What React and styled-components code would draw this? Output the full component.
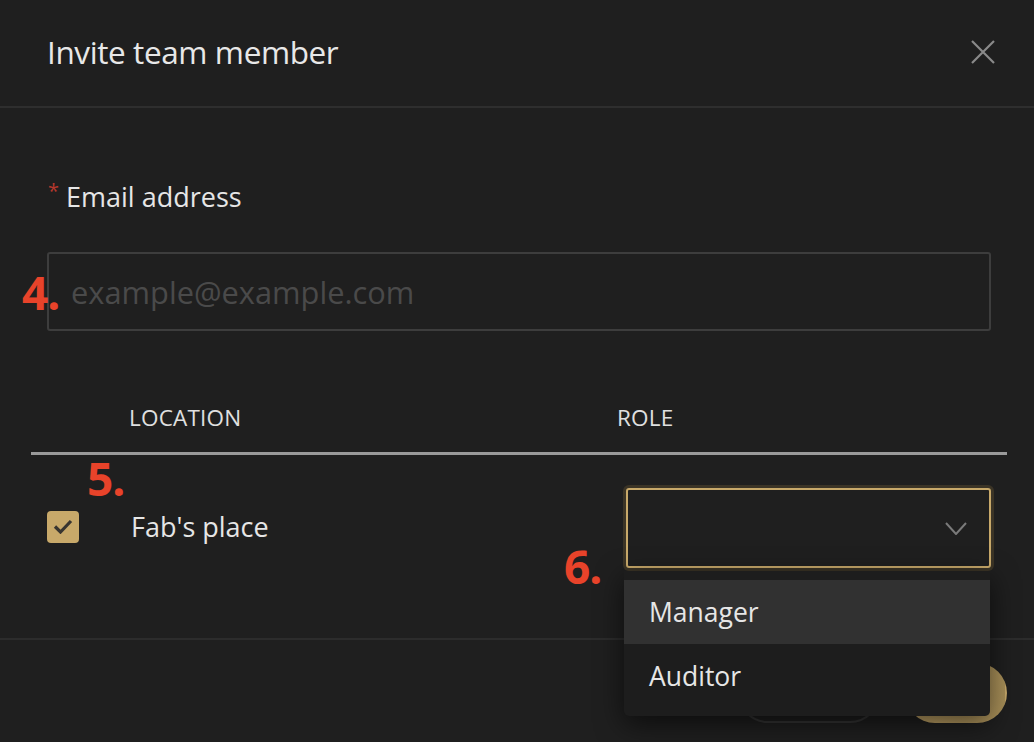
import * as React from "react";
import styled, { createGlobalStyle } from "styled-components";

const GlobalStyle = createGlobalStyle`
    html, body {
        margin: 0;
        padding: 0;
        background: #1f1f1f;
    }
    body {
        font-family: "Open Sans", "Noto Sans", sans-serif;
        color: #e6e6e6;
    }
`;

const Modal =
    styled.div`
        position: relative;
        width: 1034px;
        height: 742px;
        overflow: hidden;
        background: #1f1f1f;
        display: flex;
        flex-direction: column;
    `;

const Header =
    styled.div`
        height: 108px;
        border-bottom: 2px solid #2e2e2e;
        display: flex;
        align-items: center;
        justify-content: space-between;
        padding: 0 38px 4px 47px;
        box-sizing: border-box;

        h1 {
            margin: 0;
            font-size: 31.5px;
            font-weight: 400;
            color: #e8e8e8;
            letter-spacing: -0.4px;
        }
    `;

const CloseBtn =
    styled.button`
        background: none;
        border: 0;
        padding: 0;
        width: 26px;
        height: 26px;
        display: flex;
        align-items: center;
        justify-content: center;
        margin-top: 2px;
    `;

const Body =
    styled.div`
        padding: 71px 43px 0 47px;
        height: 532px;
        box-sizing: border-box;
        border-bottom: 2px solid #2c2c2c;
    `;

const Label =
    styled.label`
        display: flex;
        align-items: flex-start;
        font-size: 27px;
        color: #e6e6e6;
        line-height: 36px;

        .req {
            color: #b5372c;
            font-size: 20px;
            line-height: 20px;
            margin: 2px 7px 0 1px;
        }
    `;

const InputWrap =
    styled.div`
        position: relative;
        margin-top: 37px;
    `;

const TextInput =
    styled.input`
        width: 100%;
        box-sizing: border-box;
        height: 79px;
        background: transparent;
        border: 2px solid #3d3d3d;
        border-radius: 3px;
        padding: 0 22px;
        font-family: "Open Sans", "Noto Sans", sans-serif;
        font-size: 30.8px;
        color: #e6e6e6;
        outline: none;

        &::placeholder {
            color: #4a4a4a;
        }
    `;

const Marker =
    styled.span`
        position: absolute;
        font-family: "Open Sans", "Noto Sans", sans-serif;
        font-weight: 700;
        font-size: 46px;
        line-height: 1;
        color: #e8432a;
        letter-spacing: -1px;
        z-index: 6;
    `;

const Table =
    styled.div`
        margin: 54px -16px 0 -16px;
    `;

const HeadRow =
    styled.div`
        display: grid;
        grid-template-columns: 98px 488px 1fr;
        border-bottom: 3px solid #9a9a9a;
        height: 67px;
        align-items: center;

        span {
            font-size: 22.5px;
            color: #e0e0e0;
            letter-spacing: 0.2px;
            margin-top: -3px;
        }
    `;

const Row =
    styled.div`
        position: relative;
        display: grid;
        grid-template-columns: 84px 495px 365px;
        align-items: center;
        padding: 33px 0 0 16px;
    `;

const Check =
    styled.span`
        width: 32px;
        height: 32px;
        margin-top: -3px;
        border-radius: 4px;
        background: #c8a96a;
        display: flex;
        align-items: center;
        justify-content: center;
    `;

const Place =
    styled.span`
        font-size: 27px;
        color: #e6e6e6;
        margin-top: -3px;
    `;

const SelectBox =
    styled.div`
        position: relative;
        height: 80px;
        border: 2px solid #c8a96a;
        border-radius: 3px;
        box-shadow: 0 0 0 3px #3b3426;
        box-sizing: border-box;
        display: flex;
        align-items: center;
        justify-content: flex-end;
        padding-right: 22px;
    `;

const Menu =
    styled.div`
        position: absolute;
        top: calc(100% + 5px);
        left: -4px;
        width: 366px;
        background: #1d1d1d;
        border-radius: 0 0 5px 5px;
        padding: 9px 0 8px 0;
        box-shadow: 0 8px 28px rgba(0, 0, 0, 0.6);
        z-index: 5;
    `;

const MenuItem =
    styled.div`
        height: 64px;
        display: flex;
        align-items: center;
        padding-left: 25px;
        font-size: 26.5px;
        color: #e6e6e6;
        background: ${props => props.active ? "#313131" : "transparent"};
    `;

const Footer =
    styled.div`
        flex: 1;
        display: flex;
        justify-content: flex-end;
        align-items: flex-start;
        gap: 25px;
        padding: 23px 27px 0 0;
    `;

const Button =
    styled.button`
        height: 60px;
        border-radius: 30px;
        font-family: "Open Sans", "Noto Sans", sans-serif;
        font-size: 22px;
        padding: 0 24px;
        border: 2px solid ${props => props.primary ? "transparent" : "#353535"};
        background: ${props => props.primary ? "linear-gradient(90deg, #c8a96a, #a88f58)" : "transparent"};
        color: ${props => props.primary ? "#1f1f1f" : "#e6e6e6"};
        width: ${props => props.primary ? "102px" : "142px"};
    `;

const App = () => {
    return (
        <Modal>
            <GlobalStyle />
            <Header>
                <h1>Invite team member</h1>
                <CloseBtn aria-label="Close">
                    <svg width="24" height="24" viewBox="0 0 24 24" fill="none" stroke="#8a8a8a" strokeWidth="2.2">
                        <path d="M1 1 L23 23 M23 1 L1 23" />
                    </svg>
                </CloseBtn>
            </Header>

            <Body>
                <Label>
                    <span className="req">*</span>
                    Email address
                </Label>

                <InputWrap>
                    <TextInput placeholder="example@example.com" />
                    <Marker style={{ left: -25, top: 17 }}>4.</Marker>
                </InputWrap>

                <Table>
                    <HeadRow>
                        <span />
                        <span>LOCATION</span>
                        <span>ROLE</span>
                    </HeadRow>
                    <Row>
                        <Check>
                            <svg width="20" height="15" viewBox="0 0 20 15" fill="none" stroke="#383530" strokeWidth="3.2">
                                <path d="M2 7.5 L7.5 13 L18 2" />
                            </svg>
                        </Check>
                        <Place>Fab's place</Place>
                        <SelectBox>
                            <svg width="22" height="13" viewBox="0 0 22 13" fill="none" stroke="#7a7a7a" strokeWidth="2">
                                <path d="M1 1 L11 12 L21 1" />
                            </svg>
                            <Menu>
                                <MenuItem active>Manager</MenuItem>
                                <MenuItem>Auditor</MenuItem>
                            </Menu>
                        </SelectBox>
                        <Marker style={{ left: 56, top: 0 }}>5.</Marker>
                        <Marker style={{ left: 533, top: 88 }}>6.</Marker>
                    </Row>
                </Table>
            </Body>

            <Footer>
                <Button>Cancel</Button>
                <Button primary>Invite</Button>
            </Footer>
        </Modal>
    );
};

export default App;
